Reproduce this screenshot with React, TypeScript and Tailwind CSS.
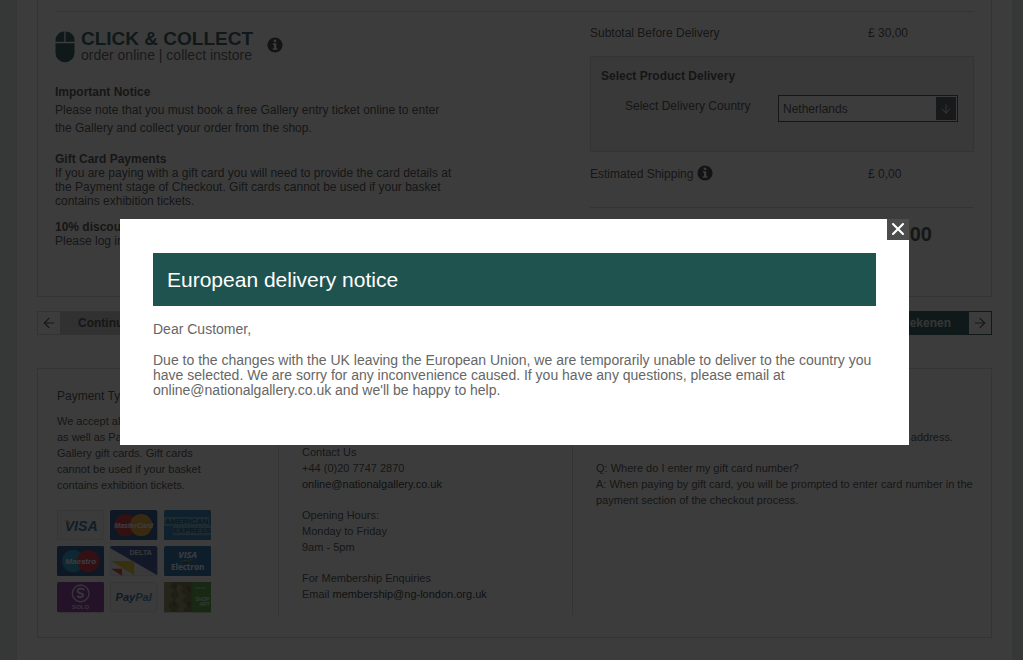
import { ArrowDown, ArrowLeft, ArrowRight, X } from "lucide-react";

const sans = "Liberation Sans, Arial, sans-serif";

function InfoIcon() {
  return (
    <svg viewBox="0 0 16 16" className="size-4 shrink-0" role="img" aria-label="Information">
      <circle cx="8" cy="8" r="7.6" fill="#3a3a3a" />
      <path d="M6.7 2.8h2.6v2.3H6.7zM5.9 6.2h3.4v5h1.1v1.6H5.8v-1.6H7V7.8H5.9z" fill="#fff" />
    </svg>
  );
}

function MouseIcon() {
  return (
    <svg viewBox="0 0 20 32" className="h-8 w-5 shrink-0" aria-hidden="true">
      <path d="M9.3.5v10.3H.5V9A8.5 8.5 0 0 1 9.3.5zM10.5.5A8.7 8.7 0 0 1 19.5 9v1.8h-9z" fill="#1f5350" />
      <path d="M.5 12.2h19V22a9.5 9.3 0 0 1-19 0z" fill="#1f5350" />
    </svg>
  );
}

function PaymentCards() {
  return (
    <ul className="grid w-[154px] grid-cols-3 gap-1.5">
      <li>
        <svg viewBox="0 0 47 30" className="block w-full" fontFamily={sans}>
          <rect x=".5" y=".5" width="46" height="29" rx="2" fill="#fafafa" stroke="#e2e2e2" />
          <text x="24" y="21" textAnchor="middle" fontSize="14" fontWeight="700" fontStyle="italic" fill="#1a6aa5">VISA</text>
          <path d="M7 10.5h5l2 6q-2-4-7-6z" fill="#e9a21b" />
        </svg>
      </li>
      <li>
        <svg viewBox="0 0 47 30" className="block w-full" fontFamily={sans}>
          <rect width="47" height="30" rx="2" fill="#1c4a88" />
          <circle cx="15.5" cy="15" r="11" fill="#d22a2a" />
          <circle cx="31" cy="15" r="11" fill="#e9a42b" />
          <text x="23.5" y="18" textAnchor="middle" fontSize="7" fontWeight="700" fontStyle="italic" fill="#fff">MasterCard</text>
        </svg>
      </li>
      <li>
        <svg viewBox="0 0 47 30" className="block w-full" fontFamily={sans}>
          <rect width="47" height="30" rx="2" fill="#1977ad" />
          <path d="M0 7h45v9h2v9H9v-9H0z" fill="#5ea3c8" />
          <g fill="#0f4f7c" fontSize="8" fontWeight="700" textAnchor="middle">
            <text x="22.5" y="14">AMERICAN</text>
            <text x="28" y="23">EXPRESS</text>
          </g>
        </svg>
      </li>
      <li>
        <svg viewBox="0 0 47 30" className="block w-full" fontFamily={sans}>
          <rect width="47" height="30" rx="2" fill="#1c4a88" />
          <circle cx="16" cy="15" r="11" fill="#1a9bd0" />
          <circle cx="31" cy="15" r="11" fill="#d1263a" />
          <text x="23.5" y="18" textAnchor="middle" fontSize="8" fontWeight="700" fontStyle="italic" fill="#fff">Maestro</text>
        </svg>
      </li>
      <li>
        <svg viewBox="0 0 47 30" className="block w-full" fontFamily={sans}>
          <rect x=".5" y=".5" width="46" height="29" rx="2" fill="#f4f4f4" stroke="#e2e2e2" />
          <path d="M0 2a2 2 0 0 1 2-2h43a2 2 0 0 1 2 2v27z" fill="#344b9a" />
          <path d="M1 15h23v14z" fill="#e6c822" />
          <path d="M1 22.5h11v7z" fill="#d93a2b" />
          <text x="30.5" y="9" textAnchor="middle" fontSize="7" fontWeight="700" fill="#e4e8f4">DELTA</text>
        </svg>
      </li>
      <li>
        <svg viewBox="0 0 47 30" className="block w-full" fontFamily="Open Sans, sans-serif">
          <rect width="47" height="30" rx="2" fill="#1966a6" />
          <text x="23.5" y="12" textAnchor="middle" fontSize="9" fontWeight="700" fontStyle="italic" fill="#fff">VISA</text>
          <path d="M14 16q9-4 19-2-10-.2-19 2z" fill="#e9a21b" />
          <text x="23.5" y="24" textAnchor="middle" fontSize="8" fontWeight="700" fill="#fff">Electron</text>
        </svg>
      </li>
      <li>
        <svg viewBox="0 0 47 30" className="block w-full" fontFamily={sans}>
          <rect width="47" height="30" rx="2" fill="#84309a" />
          <circle cx="23.5" cy="11.3" r="8.3" fill="none" stroke="#e9d8ee" strokeWidth="1.3" />
          <path d="M27 8c-3-3-8-1-6 2 1 2 5 1 5 3s-3 3-6 1" fill="none" stroke="#e9d8ee" strokeWidth="2" />
          <text x="23.5" y="27" textAnchor="middle" fontSize="6" fontWeight="700" fill="#e9d8ee">SOLO</text>
        </svg>
      </li>
      <li>
        <svg viewBox="0 0 47 30" className="block w-full" fontFamily={sans}>
          <rect x=".5" y=".5" width="46" height="29" rx="2" fill="#fafafa" stroke="#e2e2e2" />
          <text x="23.5" y="19" textAnchor="middle" fontSize="11" fontWeight="700" fontStyle="italic" fill="#1c4f8c">
            Pay<tspan fill="#2487bd">Pal</tspan>
          </text>
        </svg>
      </li>
      <li>
        <svg viewBox="0 0 47 30" className="block w-full" fontFamily={sans}>
          <rect width="47" height="30" rx="1" fill="#746f44" />
          <path d="M0 0h8l-3 5 5 3-4 5 3 4-5 6 3 7H0zM14 2l5 3-2 5 5 4-4 4 4 5-3 7h-6l2-7-4-5 4-5-3-6z" fill="#938c5c" />
          <path d="M9 1l4 3-2 3zM22 2l5 5-2 4zM9 19l3 3-2 4zM23 19l4 2-2 6z" fill="#55532f" />
          <path d="M28 0h18a1 1 0 0 1 1 1v28a1 1 0 0 1-1 1H28z" fill="#49a033" />
          <path d="M31 5h11v2H31z" fill="#7fbf70" />
          <g fill="#d5ecd0" fontSize="5" fontWeight="700">
            <text x="31" y="19">SHOP</text>
            <text x="35" y="24">ART</text>
          </g>
        </svg>
      </li>
    </ul>
  );
}

function OrderSummary() {
  return (
    <section className="border border-t-0 border-[#d8d8d8] px-[17px] pt-[11px]">
      <div className="flex min-h-[285px] justify-between border-t border-[#d8d8d8]">
        <div className="w-[400px] pt-[19px]">
          <div className="flex items-start">
            <MouseIcon />
            <h2 className="ml-1.5 text-[#555]">
              <span className="block text-[19px] leading-4 font-bold text-[#1f5350]">CLICK &amp; COLLECT</span>
              <span className="block text-[14px] leading-4">order online | collect instore</span>
            </h2>
            <span className="mt-1.5 ml-3.5">
              <InfoIcon />
            </span>
          </div>
          <h3 className="mt-5 leading-[18px] font-bold">Important Notice</h3>
          <p className="leading-[18px]">
            Please note that you must book a free Gallery entry ticket online to enter
            <br />
            the Gallery and collect your order from the shop.
          </p>
          <h3 className="mt-4 leading-[13px] font-bold">Gift Card Payments</h3>
          <p className="leading-[14px]">
            If you are paying with a gift card you will need to provide the card details at
            <br />
            the Payment stage of Checkout. Gift cards cannot be used if your basket
            <br />
            contains exhibition tickets.
          </p>
          <h3 className="mt-[13px] leading-[13px] font-bold">10% discount</h3>
          <p className="leading-[14px]">Please log in</p>
        </div>

        <div className="w-[384px] pt-3">
          <div className="flex h-8 justify-between leading-[18px]">
            <span>Subtotal Before Delivery</span>
            <span className="w-[106px]">£ 30,00</span>
          </div>
          <div className="h-24 border border-[#d8d8d8] bg-[#eee] px-2.5 pt-2.5">
            <h3 className="leading-[18px] font-bold">Select Product Delivery</h3>
            <div className="mt-2.5 flex items-start justify-between pr-[5px] pl-6">
              <label htmlFor="country" className="leading-[22px]">
                Select Delivery Country
              </label>
              <div className="relative w-[180px]">
                <select
                  id="country"
                  className="block h-[27px] w-full appearance-none border border-[#444] bg-white pl-1"
                >
                  <option>Netherlands</option>
                </select>
                <span className="pointer-events-none absolute inset-y-0.5 right-0.5 flex w-5 items-center justify-center bg-[#4c5054] text-white">
                  <ArrowDown className="size-3.5" strokeWidth={1.5} />
                </span>
              </div>
            </div>
          </div>
          <div className="mt-[13px] flex h-[43px] justify-between border-b border-[#d8d8d8] leading-[18px]">
            <span className="flex items-start gap-1">
              Estimated Shipping <InfoIcon />
            </span>
            <span className="w-[106px]">£ 0,00</span>
          </div>
          <p className="mt-3 pr-[42px] text-right text-[20px] leading-7 font-bold">30,00</p>
        </div>
      </div>
    </section>
  );
}

function HelpPanel() {
  return (
    <section className="mt-[33px] flex min-h-[270px] border border-[#d8d8d8] pt-[18px] pl-[19px] text-[11px] leading-4">
      <div className="w-[221px]">
        <h3 className="text-[12px] leading-[18px]">Payment Types</h3>
        <p className="mt-2 mb-[17px]">
          We accept all
          <br />
          as well as PayPal
          <br />
          Gallery gift cards. Gift cards
          <br />
          cannot be used if your basket
          <br />
          contains exhibition tickets.
        </p>
        <PaymentCards />
      </div>
      <div className="mb-[22px] w-[294px] border-l border-[#d8d8d8] pt-[57px] pl-[23px]">
        <p>
          Contact Us
          <br />
          +44 (0)20 7747 2870
          <br />
          <a href="mailto:online@nationalgallery.co.uk" className="text-[#152b2a]">
            online@nationalgallery.co.uk
          </a>
        </p>
        <p className="mt-[15px]">
          Opening Hours:
          <br />
          Monday to Friday
          <br />
          9am - 5pm
        </p>
        <p className="mt-[15px]">
          For Membership Enquiries
          <br />
          Email{" "}
          <a href="mailto:membership@ng-london.org.uk" className="text-[#152b2a]">
            membership@ng-london.org.uk
          </a>
        </p>
      </div>
      <div className="mb-[22px] flex-1 border-l border-[#d8d8d8] pt-[42px] pl-[23px]">
        <p className="pr-[38px] text-right">address.</p>
        <p className="mt-[15px]">
          Q: Where do I enter my gift card number?
          <br />
          A: When paying by gift card, you will be prompted to enter card number in the
          <br />
          payment section of the checkout process.
        </p>
      </div>
    </section>
  );
}

function DeliveryNotice() {
  return (
    <div
      role="dialog"
      aria-modal="true"
      aria-labelledby="notice-title"
      className="relative w-full max-w-[789px] bg-white px-[33px] pt-[34px] pb-[47px] text-[14px] leading-[15px] text-[#666]"
    >
      <button
        type="button"
        aria-label="Close"
        className="absolute top-0 right-0 flex w-[22px] justify-center bg-[#4c4c4c] pb-px text-white"
      >
        <X className="size-5" strokeWidth={2.5} />
      </button>
      <h1 id="notice-title" className="bg-[#1f5350] px-3.5 py-3 text-[21px] leading-[29px] text-white">
        European delivery notice
      </h1>
      <p className="mt-4">Dear Customer,</p>
      <p className="mt-4">
        Due to the changes with the UK leaving the European Union, we are temporarily unable to deliver to the country you
        <br />
        have selected. We are sorry for any inconvenience caused. If you have any questions, please email at
        <br />
        online@nationalgallery.co.uk and we'll be happy to help.
      </p>
    </div>
  );
}

export default function App() {
  return (
    <div className="h-screen overflow-hidden bg-[#dcebe6] pr-[11px] pl-[17px] font-['Liberation_Sans',Arial,sans-serif] text-[12px] text-[#444]">
      <main className="min-h-full bg-white px-5">
        <OrderSummary />
        <div className="mt-3.5 flex justify-between font-bold">
          <button type="button" className="flex h-6 border border-[#d0d0d0] bg-[#c8c8c8]">
            <span className="flex h-full w-[22px] items-center justify-center bg-white">
              <ArrowLeft className="size-4" strokeWidth={1.8} />
            </span>
            <span className="px-[18px] leading-[22px]">Continue</span>
          </button>
          <button type="button" className="flex h-6 border border-[#1f5350] bg-[#1f5350] text-[#ddd]">
            <span className="px-[18px] leading-[22px]">Afrekenen</span>
            <span className="flex h-full w-[22px] items-center justify-center bg-white text-[#444]">
              <ArrowRight className="size-4" strokeWidth={1.8} />
            </span>
          </button>
        </div>
        <HelpPanel />
      </main>
      <div className="fixed inset-0 flex items-start justify-center bg-[#0b0b0b]/80 pt-[219px] pl-1.5">
        <DeliveryNotice />
      </div>
    </div>
  );
}
